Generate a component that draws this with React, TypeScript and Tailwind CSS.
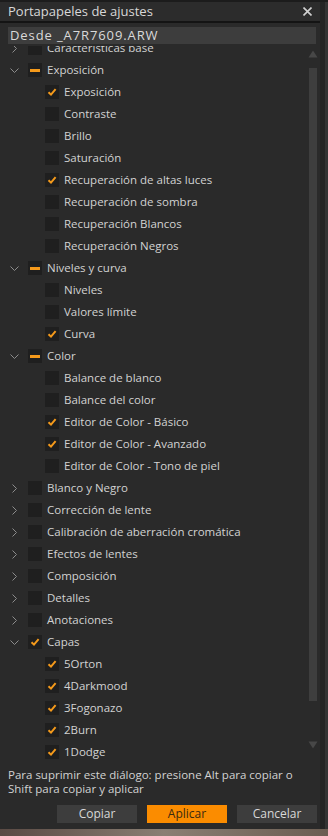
import React from 'react';

type Row = {
  label: string;
  level: 0 | 1;
  state: 'off' | 'on' | 'mixed';
  open?: boolean;
};

const rows: Row[] = [
  { label: 'Características base', level: 0, state: 'off', open: false },
  { label: 'Exposición', level: 0, state: 'mixed', open: true },
  { label: 'Exposición', level: 1, state: 'on' },
  { label: 'Contraste', level: 1, state: 'off' },
  { label: 'Brillo', level: 1, state: 'off' },
  { label: 'Saturación', level: 1, state: 'off' },
  { label: 'Recuperación de altas luces', level: 1, state: 'on' },
  { label: 'Recuperación de sombra', level: 1, state: 'off' },
  { label: 'Recuperación Blancos', level: 1, state: 'off' },
  { label: 'Recuperación Negros', level: 1, state: 'off' },
  { label: 'Niveles y curva', level: 0, state: 'mixed', open: true },
  { label: 'Niveles', level: 1, state: 'off' },
  { label: 'Valores límite', level: 1, state: 'off' },
  { label: 'Curva', level: 1, state: 'on' },
  { label: 'Color', level: 0, state: 'mixed', open: true },
  { label: 'Balance de blanco', level: 1, state: 'off' },
  { label: 'Balance del color', level: 1, state: 'off' },
  { label: 'Editor de Color - Básico', level: 1, state: 'on' },
  { label: 'Editor de Color - Avanzado', level: 1, state: 'on' },
  { label: 'Editor de Color - Tono de piel', level: 1, state: 'off' },
  { label: 'Blanco y Negro', level: 0, state: 'off', open: false },
  { label: 'Corrección de lente', level: 0, state: 'off', open: false },
  { label: 'Calibración de aberración cromática', level: 0, state: 'off', open: false },
  { label: 'Efectos de lentes', level: 0, state: 'off', open: false },
  { label: 'Composición', level: 0, state: 'off', open: false },
  { label: 'Detalles', level: 0, state: 'off', open: false },
  { label: 'Anotaciones', level: 0, state: 'off', open: false },
  { label: 'Capas', level: 0, state: 'on', open: true },
  { label: '5Orton', level: 1, state: 'on' },
  { label: '4Darkmood', level: 1, state: 'on' },
  { label: '3Fogonazo', level: 1, state: 'on' },
  { label: '2Burn', level: 1, state: 'on' },
  { label: '1Dodge', level: 1, state: 'on' },
];

const Chevron = ({ open }: { open?: boolean }) => (
  <svg width="9" height="9" viewBox="0 0 9 9" className="shrink-0">
    {open ? (
      <polyline points="0.5,2.5 4.5,6.5 8.5,2.5" fill="none" stroke="#8c8c8c" strokeWidth="1" />
    ) : (
      <polyline points="2.5,0.5 6.5,4.5 2.5,8.5" fill="none" stroke="#8c8c8c" strokeWidth="1" />
    )}
  </svg>
);

const Box = ({ state }: { state: Row['state'] }) => (
  <div className="w-[14px] h-[14px] bg-[#1f1f1f] flex items-center justify-center shrink-0">
    {state === 'on' && (
      <svg width="10" height="10" viewBox="0 0 10 10">
        <polyline points="1.5,5.2 4,7.6 8.6,2.2" fill="none" stroke="#f59a1b" strokeWidth="2" />
      </svg>
    )}
    {state === 'mixed' && <div className="w-[10px] h-[3px] bg-[#f59a1b]" />}
  </div>
);

const TreeRow = ({ row }: { row: Row }) => (
  <div className="h-[22px] flex items-center shrink-0">
    {row.level === 0 ? (
      <>
        <div className="w-[28px] pl-[10px] flex items-center">
          <Chevron open={row.open} />
        </div>
        <Box state={row.state} />
        <span className="ml-[5px] whitespace-nowrap">{row.label}</span>
      </>
    ) : (
      <>
        <div className="w-[45px]" />
        <Box state={row.state} />
        <span className="ml-[5px] whitespace-nowrap">{row.label}</span>
      </>
    )}
  </div>
);

export default function App() {
  return (
    <div
      className="w-[328px] h-[836px] bg-[#6e625a] flex flex-col text-[11.5px] text-[#d2d2d2]"
      style={{ fontFamily: '"Open Sans", "Noto Sans", sans-serif' }}
    >
      <div className="h-[829px] flex bg-[#2a2a2a] border-t-2 border-[#1c1c1c]">
        <div className="w-[320px] flex flex-col">
          {/* title */}
          <div className="h-[19px] flex items-center justify-between pl-[8px] pr-[8px] bg-[#2c2c2c]">
            <span className="text-[13px] text-[#d8d8d8] leading-none">Portapapeles de ajustes</span>
            <svg width="9" height="9" viewBox="0 0 9 9">
              <path d="M0.5 0.5 L8.5 8.5 M8.5 0.5 L0.5 8.5" stroke="#d0d0d0" strokeWidth="1.6" />
            </svg>
          </div>
          <div className="h-[2px] bg-[#141414]" />
          <div className="pt-[4px] pl-[8px] pr-[4px]">
            <div className="h-[17px] bg-[#3d3d3d] flex items-center pl-[2px] text-[13px] tracking-[0.9px] text-[#dadada]">
              Desde _A7R7609.ARW
            </div>
          </div>
          {/* tree */}
          <div className="h-[716px] mt-[2px] flex overflow-hidden">
            <div className="flex-1 overflow-hidden">
              <div className="flex flex-col -mt-[9px]">
                {rows.map((r, i) => (
                  <TreeRow key={i} row={r} />
                ))}
              </div>
            </div>
            <div className="w-[10px] mr-[2px] flex flex-col items-center pt-[4px]">
              <svg width="10" height="8" viewBox="0 0 10 8">
                <polygon points="5,0.5 9.5,7.5 0.5,7.5" fill="#474747" />
              </svg>
              <div className="w-[8px] h-[633px] mt-[10px] bg-[#3e3e3e]" />
              <svg width="10" height="8" viewBox="0 0 10 8" className="mt-[40px]">
                <polygon points="0.5,0.5 9.5,0.5 5,7.5" fill="#474747" />
              </svg>
            </div>
          </div>
          {/* hint */}
          <div className="pl-[8px] pt-[6px] leading-[14px] text-[#d2d2d2]">
            <div>Para suprimir este diálogo: presione Alt para copiar o</div>
            <div>Shift para copiar y aplicar</div>
          </div>
          <div className="flex justify-end gap-[10px] pr-[3px] mt-[9px]">
            <button className="w-[80px] h-[18px] bg-[#3d3d3d] text-[#d8d8d8] text-[12px] leading-none">
              Copiar
            </button>
            <button className="w-[80px] h-[18px] bg-[#fb8c00] text-[#3a2a10] text-[12px] leading-none">
              Aplicar
            </button>
            <button className="w-[80px] h-[18px] bg-[#3d3d3d] text-[#d8d8d8] text-[12px] leading-none">
              Cancelar
            </button>
          </div>
        </div>
        <div className="w-[5px] bg-[#242424]" />
        <div className="w-[3px] bg-[#333333]" />
      </div>
      <div className="flex-1 bg-gradient-to-r from-[#5a4a44] via-[#8a7f74] to-[#6b5d52]" />
    </div>
  );
}
